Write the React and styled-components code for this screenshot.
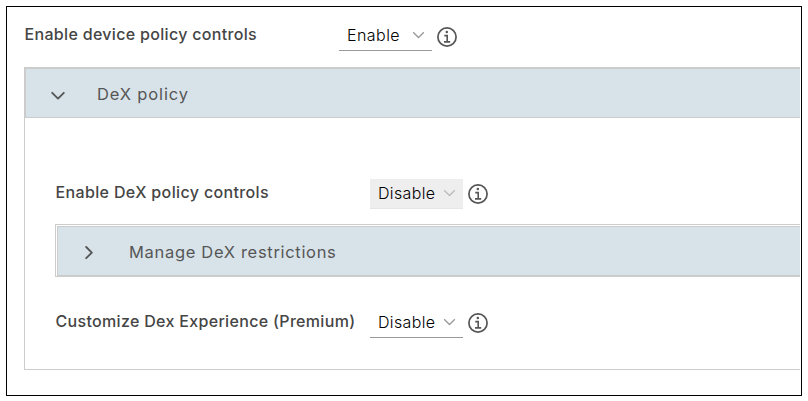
import React from "react";
import styled, { createGlobalStyle, css } from "styled-components";

const GlobalStyle = createGlobalStyle`
  * { box-sizing: border-box; }
  body { margin: 0; background: #fff; font-family: Inter, "Open Sans", sans-serif; }
`;

const Page = styled.div`
  width: 808px;
  height: 401px;
  padding: 6px;
  overflow: hidden;
`;

const Frame = styled.main`
  width: 796px;
  height: 390px;
  padding: 14px 1px 0 17px;
  border: 1px solid #000;
  background: #fff;
`;

const SettingRow = styled.div`
  display: flex;
  height: 30px;
  align-items: flex-start;
`;

const Label = styled.label`
  width: 315px;
  padding: 3px 0 0 0.5px;
  color: #454545;
  font-size: 16px;
  font-weight: 550;
  line-height: 20px;
  letter-spacing: ${(p) => p.$tracking}px;
  white-space: nowrap;
`;

const Select = styled.button`
  display: flex;
  width: 93px;
  height: 30px;
  padding: 4px 7px 0 8px;
  justify-content: space-between;
  align-items: flex-start;
  border: 0;
  border-bottom: 1px solid #999;
  background: transparent;
  color: #000;
  font: 300 16px/20px Inter, "Open Sans", sans-serif;
  letter-spacing: ${(p) => p.$tracking}px;
  white-space: nowrap;

  svg { flex: none; margin-top: 6px; }

  ${(p) => p.disabled && css`
    border-color: #e6e6e6;
    background: #eee;
  `}
`;

const InfoButton = styled.span`
  display: flex;
  margin: ${(p) => (p.$nested ? 5 : 6)}px 0 0 5px;
`;

const Panel = styled.section`
  height: 303px;
  margin-top: 16px;
  border: 1px solid #ccc;
  border-right: 0;
`;

const PanelHeader = styled.header`
  display: flex;
  height: 50px;
  align-items: flex-start;
  padding: 15px 0 0 24px;
  border: 1px solid #ccc;
  border-right: 0;
  background: #d8e3e9;
`;

const PanelTitle = styled.h2`
  margin: 0 0 0 31px;
  color: #565656;
  font-size: 16.5px;
  font-weight: 400;
  line-height: 20px;
  letter-spacing: ${(p) => p.$tracking}px;
  white-space: nowrap;
`;

const PanelBody = styled.div`
  padding: 61px 0 0 30px;
`;

const NestedPanel = styled.section`
  height: 53px;
  margin: 15px 0 31px;
  padding: 1px 0 0 1px;
  border: 1px solid #ccc;
  border-right: 0;
`;

function Caret({ muted }) {
  return (
    <svg width="13" height="8" viewBox="0 0 13 8" fill="none" stroke={muted ? "#bbb" : "#999"} strokeWidth="1.3">
      <path d="M1.2 1.2 6.5 6.5 11.8 1.2" />
    </svg>
  );
}

function Chevron({ open }) {
  return (
    <svg width="16" height="20" viewBox="0 0 16 20" fill="none" stroke="#565656" strokeWidth="1.9" strokeLinecap="round" strokeLinejoin="round">
      <path d={open ? "M2.2 8.8 8 14.6 13.8 8.8" : "M4.2 5 9.8 10.6 4.2 16.2"} />
    </svg>
  );
}

function Info({ nested }) {
  return (
    <InfoButton $nested={nested}>
      <svg width="20" height="20" viewBox="0 0 20 20" fill="none" stroke="#565656">
        <circle cx="10" cy="10" r="9.1" strokeWidth="1.7" />
        <circle cx="9.8" cy="5.1" r="1.25" fill="#565656" stroke="none" />
        <path d="M7.3 8.6h2.9v6M7 14.9h6.2" strokeWidth="1.6" />
      </svg>
    </InfoButton>
  );
}

function Setting({ label, value, tracking, disabled, nested }) {
  return (
    <SettingRow>
      <Label $tracking={tracking}>{label}</Label>
      <Select disabled={disabled} $tracking={value === "Enable" ? 0.45 : 0.35}>
        {value}
        <Caret muted={disabled} />
      </Select>
      <Info nested={nested} />
    </SettingRow>
  );
}

export default function App() {
  return (
    <>
      <GlobalStyle />
      <Page>
        <Frame>
          <Setting label="Enable device policy controls" value="Enable" tracking={0.32} />
          <Panel>
            <PanelHeader>
              <Chevron open />
              <PanelTitle $tracking={0.85}>DeX policy</PanelTitle>
            </PanelHeader>
            <PanelBody>
              <Setting label="Enable DeX policy controls" value="Disable" tracking={0.36} disabled nested />
              <NestedPanel>
                <PanelHeader>
                  <Chevron />
                  <PanelTitle $tracking={0.68}>Manage DeX restrictions</PanelTitle>
                </PanelHeader>
              </NestedPanel>
              <Setting label="Customize Dex Experience (Premium)" value="Disable" tracking={0.32} nested />
            </PanelBody>
          </Panel>
        </Frame>
      </Page>
    </>
  );
}
